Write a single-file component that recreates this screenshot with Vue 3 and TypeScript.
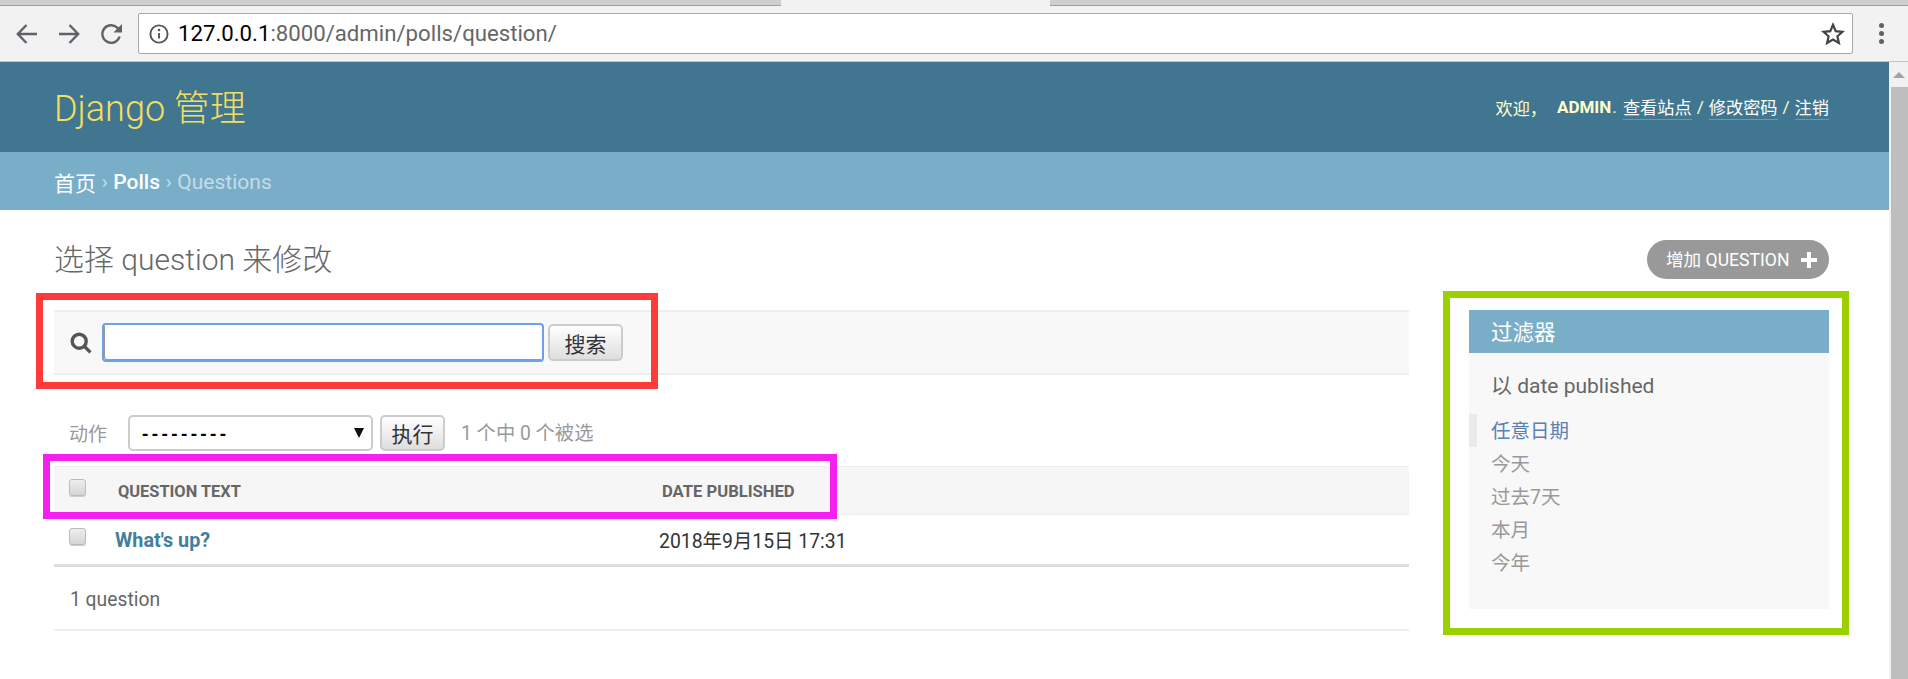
<script setup lang="ts">
const filters: { label: string; selected: boolean }[] = [
  { label: '任意日期', selected: true },
  { label: '今天', selected: false },
  { label: '过去7天', selected: false },
  { label: '本月', selected: false },
  { label: '今年', selected: false },
]
</script>

<template>
  <div class="page">
    <div class="tabs">
      <div class="tab" style="width: 2px"></div>
      <div class="tab" style="width: 276px"></div>
      <div class="tab" style="width: 258px"></div>
      <div class="tab" style="width: 245px"></div>
      <div class="tab-active"></div>
      <div class="tab" style="width: 257px"></div>
      <div class="tab" style="width: 256px"></div>
      <div class="tab tab-fill"></div>
    </div>

    <div class="toolbar">
      <div class="nav-icons">
        <svg class="nav" viewBox="0 0 24 24" width="24" height="24"><path d="M22 12H3.5M11.5 3 2.8 12l8.7 9" /></svg>
        <svg class="nav" viewBox="0 0 24 24" width="24" height="24"><path d="M2 12h18.5M12.5 3l8.7 9-8.7 9" /></svg>
        <svg class="nav" viewBox="0 0 24 24" width="24" height="24"><path d="M20.6 14.5A8.8 8.8 0 1 1 18.2 5.6L21 8.4" /><path class="solid" d="M23 2v8.6h-8.6z" /></svg>
      </div>
      <div class="urlbar">
        <svg class="info" viewBox="0 0 20 20" width="20" height="20"><circle cx="10" cy="10" r="8.6" /><path d="M10 9v5.5" /><circle class="dot" cx="10" cy="6" r="1.3" /></svg>
        <span class="url"><span class="host">127.0.0.1</span>:8000/admin/polls/question/</span>
        <svg class="star" viewBox="0 0 24 24" width="24" height="24"><path d="M12 2.8l2.7 6.3 6.8.7-5.1 4.5 1.5 6.7-5.9-3.5-5.9 3.5 1.5-6.7-5.1-4.5 6.8-.7z" /></svg>
      </div>
      <div class="menu"><i></i><i></i><i></i></div>
    </div>

    <div class="viewport">
      <div class="content">
        <header class="header">
          <div class="brand">Django 管理</div>
          <div class="usertools">
            <span class="welcome">欢迎，</span><strong>ADMIN</strong><span class="dot-sep">.</span>
            <a>查看站点</a><span>/</span><a>修改密码</a><span>/</span><a>注销</a>
          </div>
        </header>
        <nav class="crumbs">
          <span class="c-home">首页</span><span class="sep">›</span><span class="c-app">Polls</span><span class="sep">›</span><span class="c-cur">Questions</span>
        </nav>

        <main class="main">
          <div class="title-row">
            <h1>选择 question 来修改</h1>
            <a class="addlink"><span>增加 QUESTION</span>
              <svg viewBox="0 0 16 16" width="16" height="16"><path d="M6 0h4v6h6v4h-6v6H6v-6H0V6h6z" /></svg>
            </a>
          </div>

          <div class="columns">
            <section class="list">
              <div class="search-box">
                <div class="search">
                  <svg viewBox="0 0 22 22" width="22" height="22"><circle cx="9.2" cy="9.2" r="7" /><path d="M14.4 14.4 20.4 20.4" /></svg>
                  <input class="q" type="text" />
                  <button class="btn search-btn">搜索</button>
                </div>
                <div class="mark mark-red"></div>
              </div>

              <div class="actions">
                <span class="act-label">动作</span>
                <div class="select-wrap">
                  <select class="select"><option>---------</option></select>
                  <span class="arrow"></span>
                </div>
                <button class="btn go-btn">执行</button>
                <span class="counter">1 个中 0 个被选</span>
              </div>

              <div class="table">
                <div class="row head">
                  <div class="cell-check"><input class="check" type="checkbox" /></div>
                  <div class="cell-q">QUESTION TEXT</div>
                  <div class="cell-d">DATE PUBLISHED</div>
                </div>
                <div class="row item">
                  <div class="cell-check"><input class="check" type="checkbox" /></div>
                  <div class="cell-q"><a>What's up?</a></div>
                  <div class="cell-d">2018年9月15日 17:31</div>
                </div>
                <div class="mark mark-pink"></div>
              </div>
              <p class="paginator">1 question</p>
            </section>

            <aside class="filter">
              <h2>过滤器</h2>
              <h3>以 date published</h3>
              <ul>
                <li v-for="f in filters" :key="f.label" :class="{ selected: f.selected }">{{ f.label }}</li>
              </ul>
              <div class="mark mark-green"></div>
            </aside>
          </div>
        </main>
      </div>
      <div class="scrollbar">
        <div class="sb-arrow"><span></span></div>
        <div class="sb-thumb"></div>
      </div>
    </div>
  </div>
</template>

<style>
html, body { margin: 0; padding: 0; overflow: hidden; background: #fff; }
</style>

<style scoped>
.page {
  width: 1908px; height: 679px; overflow: hidden; display: flex; flex-direction: column;
  font-family: Roboto, "Noto Sans CJK SC", sans-serif; color: #333; background: #fff;
}
.tabs { height: 6px; display: flex; flex: none; }
.tab { height: 5px; background: #cfcfcf; border-bottom: 1px solid #a0a0a0; border-right: 1px solid #8f8f8f; box-sizing: content-box; flex: none; margin-right: -1px; }
.tab-active { width: 269px; background: #f2f2f2; flex: none; }
.tab-fill { flex: 1; border-right: 0; margin: 0; }

.toolbar { height: 56px; flex: none; background: #f2f2f2; display: flex; align-items: center; box-sizing: border-box; border-bottom: 1px solid #c4c4c4; }
.nav-icons { display: flex; gap: 18px; padding-left: 15px; width: 123px; flex: none; }
.nav { fill: none; stroke: #5f6368; stroke-width: 2.4; flex: none; }
.nav .solid { fill: #5f6368; stroke: none; }
.urlbar { width: 1715px; height: 41px; box-sizing: border-box; background: #fff; border: 1px solid #a9a9a9; border-radius: 2px; display: flex; align-items: center; padding: 0 7px 0 10px; flex: none; }
.info { fill: none; stroke: #555; stroke-width: 1.9; flex: none; }
.info .dot { fill: #555; stroke: none; }
.url { font-size: 22.2px; color: #666; margin: -1px 0 0 9px; flex: 1; white-space: nowrap; font-family: Roboto, sans-serif; }
.host { color: #000; }
.star { fill: none; stroke: #444; stroke-width: 2.2; flex: none; }
.menu { display: flex; flex-direction: column; gap: 3px; margin-left: 26px; }
.menu i { width: 5px; height: 5px; border-radius: 50%; background: #5f6368; display: block; }

.viewport { flex: 1; display: flex; min-height: 0; }
.content { flex: 1; min-width: 0; }
.scrollbar { width: 19px; flex: none; background: #f1f1f1; display: flex; flex-direction: column; align-items: flex-end; }
.sb-arrow { height: 25px; width: 19px; display: flex; align-items: center; justify-content: center; }
.sb-arrow span { border-style: solid; border-color: transparent; border-width: 0 6px 6px; border-bottom-color: #a3a3a3; }
.sb-thumb { flex: 1; width: 17px; background: #bebebe; }

.header { height: 90px; background: #417690; display: flex; align-items: center; justify-content: space-between; padding: 0 60px 0 54px; }
.brand { font-size: 36px; font-weight: 300; color: #f5dd5d; margin-top: -4px; }
.usertools { display: flex; align-items: center; font-size: 17.2px; color: #ffc; gap: 5px; }
.welcome { margin-right: -1px; white-space: pre; }
.usertools strong { font-weight: 700; font-size: 17px; margin-left: 6px; }
.dot-sep { margin-left: -4px; margin-right: 1px; }
.usertools a { color: #fff; border-bottom: 1px solid rgba(255, 255, 255, 0.25); }

.crumbs { height: 58px; background: #79aec8; display: flex; align-items: center; padding: 1px 0 0 54px; box-sizing: border-box; font-size: 21px; color: #fff; }
.sep { color: #c4dce8; margin: 0 5.5px; }
.c-app { font-weight: 500; }
.c-cur { color: #c4dce8; }

.main { padding: 30px 60px 0 54px; }
.title-row { display: flex; justify-content: space-between; align-items: flex-start; height: 39px; margin-bottom: 31px; }
h1 { margin: 0; font-size: 30px; line-height: 40px; font-weight: 300; color: #666; }
.addlink { height: 39px; width: 182px; box-sizing: border-box; border-radius: 20px; background: #999; color: #fff; font-size: 17.6px; display: flex; align-items: center; justify-content: space-between; padding: 0 12px 2px 19px; white-space: nowrap; }
.addlink svg { fill: #fff; margin-top: 2px; }

.columns { display: flex; gap: 60px; align-items: flex-start; }
.list { width: 1355px; flex: none; }
.search-box { position: relative; }
.search { height: 65px; box-sizing: border-box; background: #f8f8f8; border-top: 2px solid #eee; border-bottom: 2px solid #eee; display: flex; align-items: center; padding-left: 16px; }
.search svg { fill: none; stroke: #555; stroke-width: 3.4; flex: none; margin-right: 10px; }
.q { width: 442px; height: 39px; box-sizing: border-box; border: 2px solid #6ea0ec; border-radius: 4px; background: #fff; outline: none; padding: 0 6px; box-shadow: inset 1px -1px 0 #999; flex: none; }
.btn { border: 2px solid #ccc; border-radius: 5px; background: linear-gradient(#fff, #dedede); color: #333; font-family: inherit; padding: 0; flex: none; }
.search-btn { width: 75px; height: 37px; font-size: 21px; margin-left: 4px; }

.actions { margin-top: 40px; height: 36px; display: flex; align-items: center; padding-left: 15px; }
.act-label { font-size: 19px; color: #999; width: 59px; flex: none; margin-top: -2px; }
.select-wrap { position: relative; width: 245px; height: 36px; flex: none; }
.select { appearance: none; width: 100%; height: 100%; box-sizing: border-box; border: 2px solid #ccc; border-radius: 5px; background: #fff; padding: 0 0 0 12px; font-family: "Liberation Sans", sans-serif; font-size: 19px; font-weight: 700; letter-spacing: 3.4px; color: #000; outline: none; }
.arrow { position: absolute; right: 9px; top: 13px; border-left: 5px solid transparent; border-right: 5px solid transparent; border-top: 10px solid #111; }
.go-btn { width: 65px; height: 36px; font-size: 21px; margin-left: 7px; }
.counter { margin: -2px 0 0 16px; font-size: 19.3px; color: #999; }

.table { position: relative; margin-top: 15px; }
.row { display: flex; align-items: stretch; }
.head { height: 49px; background: #f6f6f6; border-top: 1px solid #eee; border-bottom: 1px solid #eee; box-sizing: border-box; font-size: 16.4px; font-weight: 700; color: #666; padding-top: 1px; }
.head .cell-d { font-size: 16.6px; margin-left: 1px; }
.item { height: 52px; box-sizing: border-box; border-bottom: 3px solid #ddd; font-size: 19.4px; }
.cell-check { width: 61px; padding: 11px 0 0 15px; box-sizing: border-box; flex: none; }
.item .cell-check { padding-top: 13px; }
.cell-q { display: flex; align-items: center; width: 546px; flex: none; padding-left: 3px; box-sizing: border-box; }
.item .cell-q { padding: 2px 0 0; }
.item a { color: #447e9b; font-weight: 700; font-size: 19.8px; }
.cell-d { display: flex; align-items: center; }
.item .cell-d { color: #333; margin-left: -2px; }
.check { appearance: none; width: 17px; height: 17px; margin: 0; box-sizing: border-box; border: 1px solid #bbb; border-radius: 3px; background: linear-gradient(#eee, #d5d5d5); box-shadow: 0 1px 0 #ccc; display: block; }

.paginator { margin: 0; height: 64px; box-sizing: border-box; border-bottom: 2px solid #eee; padding: 0 0 0 16px; font-size: 19.3px; line-height: 66px; color: #666; }

.filter { position: relative; width: 360px; height: 299px; background: #f8f8f8; flex: none; }
h2 { margin: 0; height: 43px; background: #79aec8; color: #fff; font-size: 21.5px; font-weight: 400; line-height: 45px; padding-left: 22px; }
h3 { margin: 20px 0 0; padding-left: 22px; font-size: 21px; line-height: 26px; font-weight: 400; color: #666; }
ul { margin: 15px 0 0; padding: 0; list-style: none; }
li { height: 33px; line-height: 35px; padding-left: 22px; font-size: 19.5px; color: #999; }
li.selected { color: #5b80b2; border-left: 8px solid #eaeaea; padding-left: 14px; }

.mark { position: absolute; box-sizing: border-box; pointer-events: none; }
.mark-red { left: -18px; top: -17px; width: 622px; height: 96px; border: 7px solid #ff3a3a; }
.mark-pink { left: -11px; top: -12px; width: 794px; height: 65px; border: 7px solid #f520f0; }
.mark-green { left: -26px; top: -19px; width: 406px; height: 344px; border: 7px solid #9ccf00; }
</style>
